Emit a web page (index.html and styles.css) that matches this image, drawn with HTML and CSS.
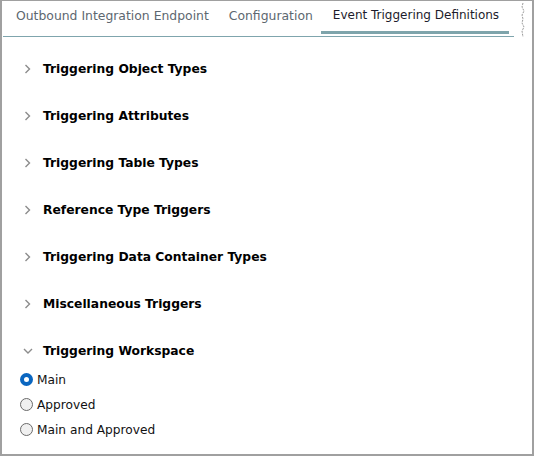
FILE: index.html
```html
<!DOCTYPE html>
<html>
<head>
<meta charset="utf-8">
<link rel="stylesheet" href="styles.css">
</head>
<body>
<div class="frame">
  <div class="tabbar">
    <div class="tab">Outbound Integration Endpoint</div>
    <div class="tab tight">Configuration</div>
    <div class="tab active">Event Triggering Definitions</div>
    <svg class="torn" width="6" height="34" viewBox="0 0 6 34"><path d="M3 0 L2 4 L4 8 L2 12 L3 16 L2 20 L4 24 L2 28 L3 34" fill="none" stroke="#9a9a9a" stroke-width="1" stroke-dasharray="2 1"/></svg>
  </div>
  <div class="content">
    <div class="section"><svg class="chev" width="8" height="10" viewBox="0 0 8 10"><path d="M1.5 1 L5.5 5 L1.5 9" fill="none" stroke="#8c8c8c" stroke-width="1.4"/></svg><span class="title">Triggering Object Types</span></div>
    <div class="section"><svg class="chev" width="8" height="10" viewBox="0 0 8 10"><path d="M1.5 1 L5.5 5 L1.5 9" fill="none" stroke="#8c8c8c" stroke-width="1.4"/></svg><span class="title">Triggering Attributes</span></div>
    <div class="section"><svg class="chev" width="8" height="10" viewBox="0 0 8 10"><path d="M1.5 1 L5.5 5 L1.5 9" fill="none" stroke="#8c8c8c" stroke-width="1.4"/></svg><span class="title">Triggering Table Types</span></div>
    <div class="section"><svg class="chev" width="8" height="10" viewBox="0 0 8 10"><path d="M1.5 1 L5.5 5 L1.5 9" fill="none" stroke="#8c8c8c" stroke-width="1.4"/></svg><span class="title">Reference Type Triggers</span></div>
    <div class="section"><svg class="chev" width="8" height="10" viewBox="0 0 8 10"><path d="M1.5 1 L5.5 5 L1.5 9" fill="none" stroke="#8c8c8c" stroke-width="1.4"/></svg><span class="title">Triggering Data Container Types</span></div>
    <div class="section"><svg class="chev" width="8" height="10" viewBox="0 0 8 10"><path d="M1.5 1 L5.5 5 L1.5 9" fill="none" stroke="#8c8c8c" stroke-width="1.4"/></svg><span class="title">Miscellaneous Triggers</span></div>
    <div class="section"><svg class="chev down" width="10" height="8" viewBox="0 0 10 8"><path d="M1 2 L5 6 L9 2" fill="none" stroke="#8c8c8c" stroke-width="1.4"/></svg><span class="title">Triggering Workspace</span></div>
    <div class="radios">
      <label class="radio"><span class="dot checked"></span>Main</label>
      <label class="radio"><span class="dot"></span>Approved</label>
      <label class="radio"><span class="dot"></span>Main and Approved</label>
    </div>
  </div>
</div>
</body>
</html>
```
FILE: styles.css
```css
html, body { margin: 0; padding: 0; background: #fff; }
body { font-family: "DejaVu Sans", sans-serif; }
.frame {
  width: 534px; height: 456px; box-sizing: border-box;
  border: 1px solid #a0a0a0; border-left-width: 2px; border-bottom-width: 2px; border-right-width: 2px;
  position: relative; overflow: hidden;
}
.tabbar {
  display: flex; align-items: stretch; height: 35px;
  margin: 0 18px 0 1px; padding-left: 3px; border-bottom: 1px solid #7fa5ad;
  position: relative;
}
.tab {
  font-size: 12.4px; color: #5d6770; padding: 7px 10px 0; box-sizing: border-box;
  white-space: nowrap;
}
.tab.tight { padding-right: 8px; }
.tab.active { color: #1c1c2c; border-bottom: 3px solid #7ea4ab; margin-bottom: 2px; padding: 7px 10px 0 12px; font-size: 12px; }
.torn { position: absolute; right: -12px; top: 2px; }
.content { padding: 0 0 0 18px; }
.section {
  height: 47px; display: flex; align-items: center; padding-left: 4px;
}
.section:first-child { margin-top: 8px; }
.chev { flex: none; margin-right: 11px; }
.chev.down { margin-left: -1px; margin-right: 10px; }
.title { font-weight: bold; font-size: 12.3px; color: #000; }
.radios { display: flex; flex-direction: column; margin-top: -7px; }
.radio { height: 25px; display: flex; align-items: center; gap: 4px; font-size: 12.2px; color: #111; }
.dot {
  width: 11px; height: 11px; border-radius: 50%; border: 1px solid #6a6a6a; background: #f0f0f0;
  box-sizing: content-box;
}
.dot.checked { border: 4px solid #0a66c0; background: #fff; width: 5px; height: 5px; }
```
